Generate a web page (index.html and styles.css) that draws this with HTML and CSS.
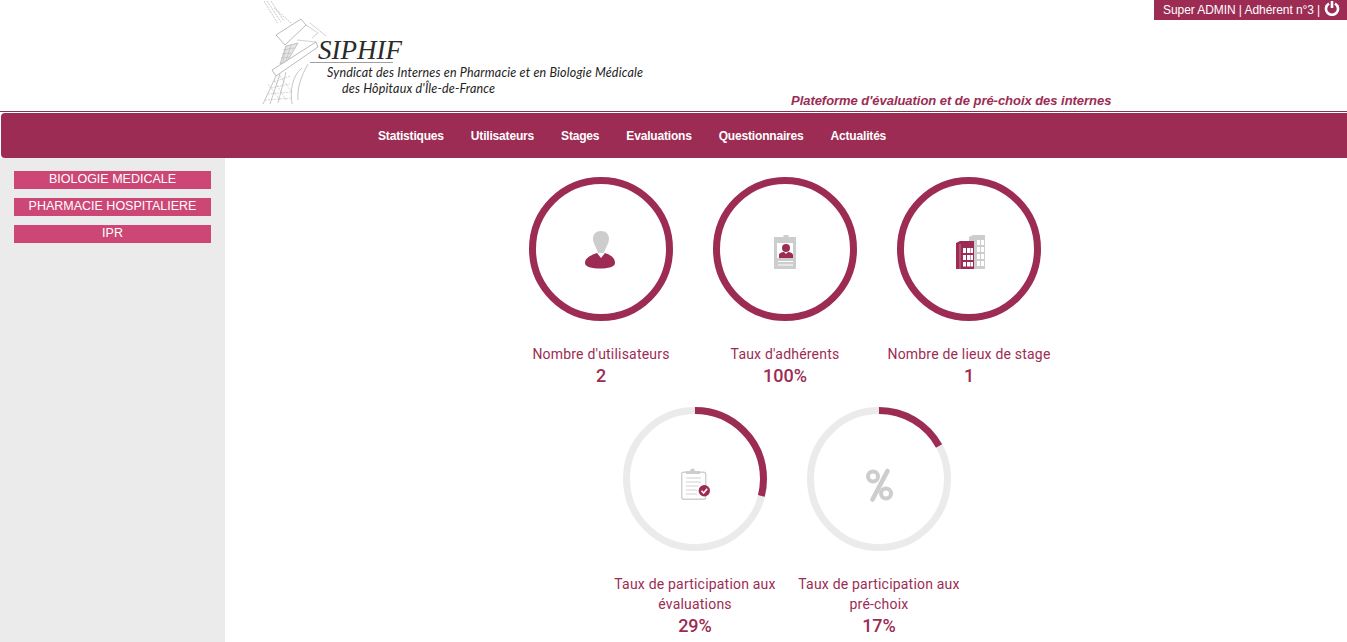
FILE: index.html
```html
<!DOCTYPE html>
<html lang="fr">

<head>
    <meta charset="UTF-8">
    <meta name="viewport" content="width=device-width, initial-scale=1.0" />
    <title>SIPHIF - Statistiques</title>
    <link rel="stylesheet" href="styles.css">
</head>

<body>
    <!-- Header -->
    <header class="header">
        <svg class="logo" width="420" height="111" viewBox="0 0 420 111">
            <!-- Eiffel tower sketch -->
            <g fill="none" stroke="#b8b8b8" stroke-width="0.8">
                <path d="M14 1 L28 24 M17 1 L31 22 M21 1 L34 21 M24 8 L41 23" stroke-dasharray="2 1" />
                <path d="M26 35 L51 19 L56 25 L35 45 Z" fill="#fff" stroke="#a8a8a8" />
                <path d="M56 25 L68 33 L62 38 M60 23 L76 36 M47 40 L66 42" stroke="#c4c4c4" />
                <path d="M22 70 L66 42 L68 47 L26 76 Z" fill="#fff" stroke="#a8a8a8" />
                <path d="M36 46 L48 43 L38 60 L30 64 Z" fill="#e6e6e6" />
                <path d="M33 50 L44 48 M32 54 L41 53 M31 58 L40 57 M36 46 L33 62 M41 45 L36 61" stroke-width="0.6" />
                <path d="M26 76 L13 104 M30 74 L20 104 M36 72 L28 103 M52 68 C42 76 40 90 42 104 M58 64 C50 78 47 90 48 100" />
                <path d="M24 82 L40 76 M21 88 L40 84 M18 94 L41 92 M15 100 L42 98" stroke-dasharray="2 1" stroke-width="0.6" />
                <path d="M30 100 L18 84 M36 100 L24 80 M42 92 L30 76" stroke-dasharray="2 1" stroke-width="0.6" />
            </g>
            <text class="logo-name" x="68" y="59">SIPHIF</text>
            <path d="M60 62.5 H143" stroke="#777" stroke-width="0.7" />
            <text class="logo-sub" x="77" y="77" textLength="316">Syndicat des Internes en Pharmacie et en Biologie Médicale</text>
            <text class="logo-sub" x="92" y="93" textLength="153">des Hôpitaux d'Île-de-France</text>
        </svg>
        <div class="header-right">
            <div class="user-box">
                <span>Super ADMIN | Adhérent n°3 | </span>
                <svg class="power" width="16" height="16" viewBox="0 0 16 16">
                    <path d="M5 3.6 A6 6 0 1 0 11 3.6" fill="none" stroke="#fff" stroke-width="2.6" />
                    <path d="M8 1 V8" stroke="#fff" stroke-width="2.6" />
                </svg>
            </div>
            <p class="tagline">Plateforme d'évaluation et de pré-choix des internes</p>
        </div>
    </header>

    <!-- Navigation Bar -->
    <nav class="topnav">
        <a href="#">Statistiques</a>
        <a href="#">Utilisateurs</a>
        <a href="#">Stages</a>
        <a href="#">Evaluations</a>
        <a href="#">Questionnaires</a>
        <a href="#">Actualités</a>
    </nav>

    <div class="layout">
        <!-- Sidebar -->
        <aside class="sidebar">
            <a href="#">BIOLOGIE MEDICALE</a>
            <a href="#">PHARMACIE HOSPITALIERE</a>
            <a href="#">IPR</a>
        </aside>

        <!-- Main Content -->
        <main class="content">
            <div class="stat-row">
                <div class="stat">
                    <div class="ring">
                        <svg width="144" height="144" viewBox="0 0 144 144">
                            <circle class="ring-bar" cx="72" cy="72" r="68.5" pathLength="100" stroke-dasharray="100 100" />
                        </svg>
                        <svg class="ring-icon" width="60" height="60" viewBox="1 -1 60 60">
                            <path class="grey" d="M31 11 C26 11 23 14 23 19 C23 24 27 28 28 33 L34 33 C35 28 39 24 39 19 C39 14 36 11 31 11 Z" />
                            <path class="red" d="M15 43 C15 38 21 35 27 33 L31 38 L35 33 C41 35 45 38 45 43 C45 47 38 48.5 30 48.5 C22 48.5 15 47 15 43 Z" />
                        </svg>
                    </div>
                    <p class="stat-label">Nombre d'utilisateurs</p>
                    <p class="stat-value">2</p>
                </div>

                <div class="stat">
                    <div class="ring">
                        <svg width="144" height="144" viewBox="0 0 144 144">
                            <circle class="ring-bar" cx="72" cy="72" r="68.5" pathLength="100" stroke-dasharray="100 100" />
                        </svg>
                        <svg class="ring-icon" width="60" height="60" viewBox="0 -1 60 60">
                            <rect class="grey" x="19" y="17" width="22" height="32" />
                            <rect class="grey" x="28.5" y="15" width="5" height="6" />
                            <rect fill="#fff" x="22" y="23" width="16" height="15" />
                            <circle class="red" cx="31" cy="28" r="4" />
                            <path class="red" d="M24 38 V35 C24 33 27 32 29 32 L31 34 L33 32 C35 32 38 33 38 35 V38 Z" />
                            <path d="M23 41.5 H38 M23 45 H38" stroke="#fff" stroke-width="1" />
                        </svg>
                    </div>
                    <p class="stat-label">Taux d'adhérents</p>
                    <p class="stat-value">100%</p>
                </div>

                <div class="stat">
                    <div class="ring">
                        <svg width="144" height="144" viewBox="0 0 144 144">
                            <circle class="ring-bar" cx="72" cy="72" r="68.5" pathLength="100" stroke-dasharray="100 100" />
                        </svg>
                        <svg class="ring-icon" width="60" height="60" viewBox="-1 -1 60 60">
                            <path class="grey" d="M29 17 L33 15 H45 V49 H34 V21 H29 Z" />
                            <g fill="#fff">
                                <rect x="37" y="20" width="3" height="5" />
                                <rect x="41" y="20" width="3" height="5" />
                                <rect x="37" y="27" width="3" height="5" />
                                <rect x="41" y="27" width="3" height="5" />
                                <rect x="37" y="34" width="3" height="5" />
                                <rect x="41" y="34" width="3" height="5" />
                                <rect x="37" y="41" width="3" height="5" />
                                <rect x="41" y="41" width="3" height="5" />
                            </g>
                            <path class="red" d="M16 23 L20 21 H34 V49 H16 Z" />
                            <path d="M20 24 V49" stroke="#d98aa6" stroke-width="0.8" />
                            <g fill="#fff">
                                <rect x="23" y="28" width="3" height="5" />
                                <rect x="27" y="28" width="3" height="5" />
                                <rect x="30.5" y="28" width="2.5" height="5" />
                                <rect x="23" y="35" width="3" height="5" />
                                <rect x="27" y="35" width="3" height="5" />
                                <rect x="30.5" y="35" width="2.5" height="5" />
                                <rect x="23" y="42" width="3" height="4.5" />
                                <rect x="27" y="42" width="3" height="4.5" />
                                <rect x="30.5" y="42" width="2.5" height="4.5" />
                            </g>
                        </svg>
                    </div>
                    <p class="stat-label">Nombre de lieux de stage</p>
                    <p class="stat-value">1</p>
                </div>
            </div>

            <div class="stat-row stat-row-second">
                <div class="stat">
                    <div class="ring">
                        <svg width="144" height="144" viewBox="0 0 144 144">
                            <circle class="ring-track" cx="72" cy="72" r="68.5" />
                            <circle class="ring-bar" cx="72" cy="72" r="68.5" pathLength="100" stroke-dasharray="29 100" />
                        </svg>
                        <svg class="ring-icon" width="60" height="60" viewBox="0 -6 60 60">
                            <rect x="16.7" y="17.2" width="24" height="27" rx="2" fill="#fff" stroke="#d0d0d0" stroke-width="1.4" />
                            <path class="grey" d="M21 19 V16 H25 C25 12.5 30 12.5 30 16 H35 V19 Z" />
                            <path d="M21 23 H36 M21 27 H36 M21 31 H33 M21 35 H32 M21 39 H32" stroke="#d0d0d0" stroke-width="1" />
                            <circle class="red" cx="39.3" cy="35.7" r="5.7" />
                            <path d="M36.5 35.7 L38.6 38 L42.2 33.8" fill="none" stroke="#fff" stroke-width="1.5" />
                        </svg>
                    </div>
                    <p class="stat-label">Taux de participation aux évaluations</p>
                    <p class="stat-value">29%</p>
                </div>

                <div class="stat">
                    <div class="ring">
                        <svg width="144" height="144" viewBox="0 0 144 144">
                            <circle class="ring-track" cx="72" cy="72" r="68.5" />
                            <circle class="ring-bar" cx="72" cy="72" r="68.5" pathLength="100" stroke-dasharray="17 100" />
                        </svg>
                        <svg class="ring-icon" width="60" height="60" viewBox="-1 -6 60 60">
                            <g fill="none" stroke="#cdcdcd" stroke-width="4">
                                <circle cx="23" cy="21.5" r="5" />
                                <circle cx="36" cy="38.5" r="5" />
                                <path d="M37.5 16 L22.5 44.5" stroke-width="4.6" stroke-linecap="round" />
                            </g>
                        </svg>
                    </div>
                    <p class="stat-label">Taux de participation aux pré-choix</p>
                    <p class="stat-value">17%</p>
                </div>
            </div>
        </main>
    </div>
</body>

</html>
```

FILE: styles.css
```css
/* Reset some basic styles */
* {
    margin: 0;
    padding: 0;
    box-sizing: border-box;
}

html,
body {
    height: 100%;
    overflow: hidden;
}

body {
    display: flex;
    flex-direction: column;
    font-family: "Liberation Sans", Arial, sans-serif;
    background-color: #fff;
}

/* Header */
.header {
    display: flex;
    height: 112px;
    padding-left: 250px;
    border-bottom: 1px solid #7d3a52;
}

.logo {
    flex: none;
    display: block;
}

.logo-name {
    font-family: "Liberation Serif", serif;
    font-style: italic;
    font-size: 27px;
    fill: #2b2b2b;
}

.logo-sub {
    font-family: Lato, sans-serif;
    font-style: italic;
    font-size: 12.5px;
    fill: #222;
}

.header-right {
    flex: 1;
    display: flex;
    flex-direction: column;
    justify-content: space-between;
}

.user-box {
    align-self: flex-end;
    display: flex;
    align-items: center;
    width: 193px;
    height: 20px;
    padding-left: 9px;
    font-size: 12px;
    letter-spacing: -0.07px;
    white-space: pre;
    color: #fff;
    background-color: #9c2c54;
}

.power {
    margin: -4px 0 0 1px;
}

.tagline {
    margin: 0 0 3px 121px;
    font-size: 13px;
    font-weight: bold;
    font-style: italic;
    line-height: 15px;
    letter-spacing: -0.04px;
    color: #9c2c54;
}

/* Navigation Bar */
.topnav {
    flex: none;
    display: flex;
    align-items: center;
    gap: 27px;
    height: 45px;
    margin: 1px 0 0 1px;
    padding-left: 377px;
    background-color: #9c2c54;
    border-radius: 4px 0 0 4px;
}

.topnav a {
    font-size: 12px;
    font-weight: bold;
    letter-spacing: -0.18px;
    color: #fff;
    text-decoration: none;
}

/* Sidebar and content */
.layout {
    flex: 1;
    display: flex;
    min-height: 0;
}

.sidebar {
    flex: none;
    display: flex;
    flex-direction: column;
    gap: 9px;
    width: 225px;
    padding: 13px 14px;
    background-color: #ebebeb;
}

.sidebar a {
    height: 18px;
    font-size: 12.5px;
    line-height: 17px;
    text-align: center;
    color: #fff;
    text-decoration: none;
    background-color: #cc4775;
}

.content {
    flex: 1;
    padding: 19px 2px 0 0;
}

.stat-row {
    display: flex;
    justify-content: center;
}

.stat-row-second {
    margin: 19px 0 0 4px;
}

.stat {
    width: 184px;
    text-align: center;
}

/* Rings */
.ring {
    display: grid;
    place-items: center;
    width: 144px;
    height: 144px;
    margin: 0 auto 23px;
}

.ring > svg {
    grid-area: 1 / 1;
}

.ring-track,
.ring-bar {
    fill: none;
    stroke-width: 7;
}

.ring-track {
    stroke: #ebebeb;
}

.ring-bar {
    stroke: #9c2c54;
    transform: rotate(-90deg);
    transform-origin: center;
}

.grey {
    fill: #cdcdcd;
}

.red {
    fill: #9c2c54;
}

.stat-label {
    font-family: Roboto, sans-serif;
    font-size: 14px;
    line-height: 20px;
    letter-spacing: 0.2px;
    color: #9c2c54;
}

.stat-value {
    font-family: Roboto, sans-serif;
    font-size: 18px;
    font-weight: 500;
    line-height: 24px;
    color: #9c2c54;
}
```
